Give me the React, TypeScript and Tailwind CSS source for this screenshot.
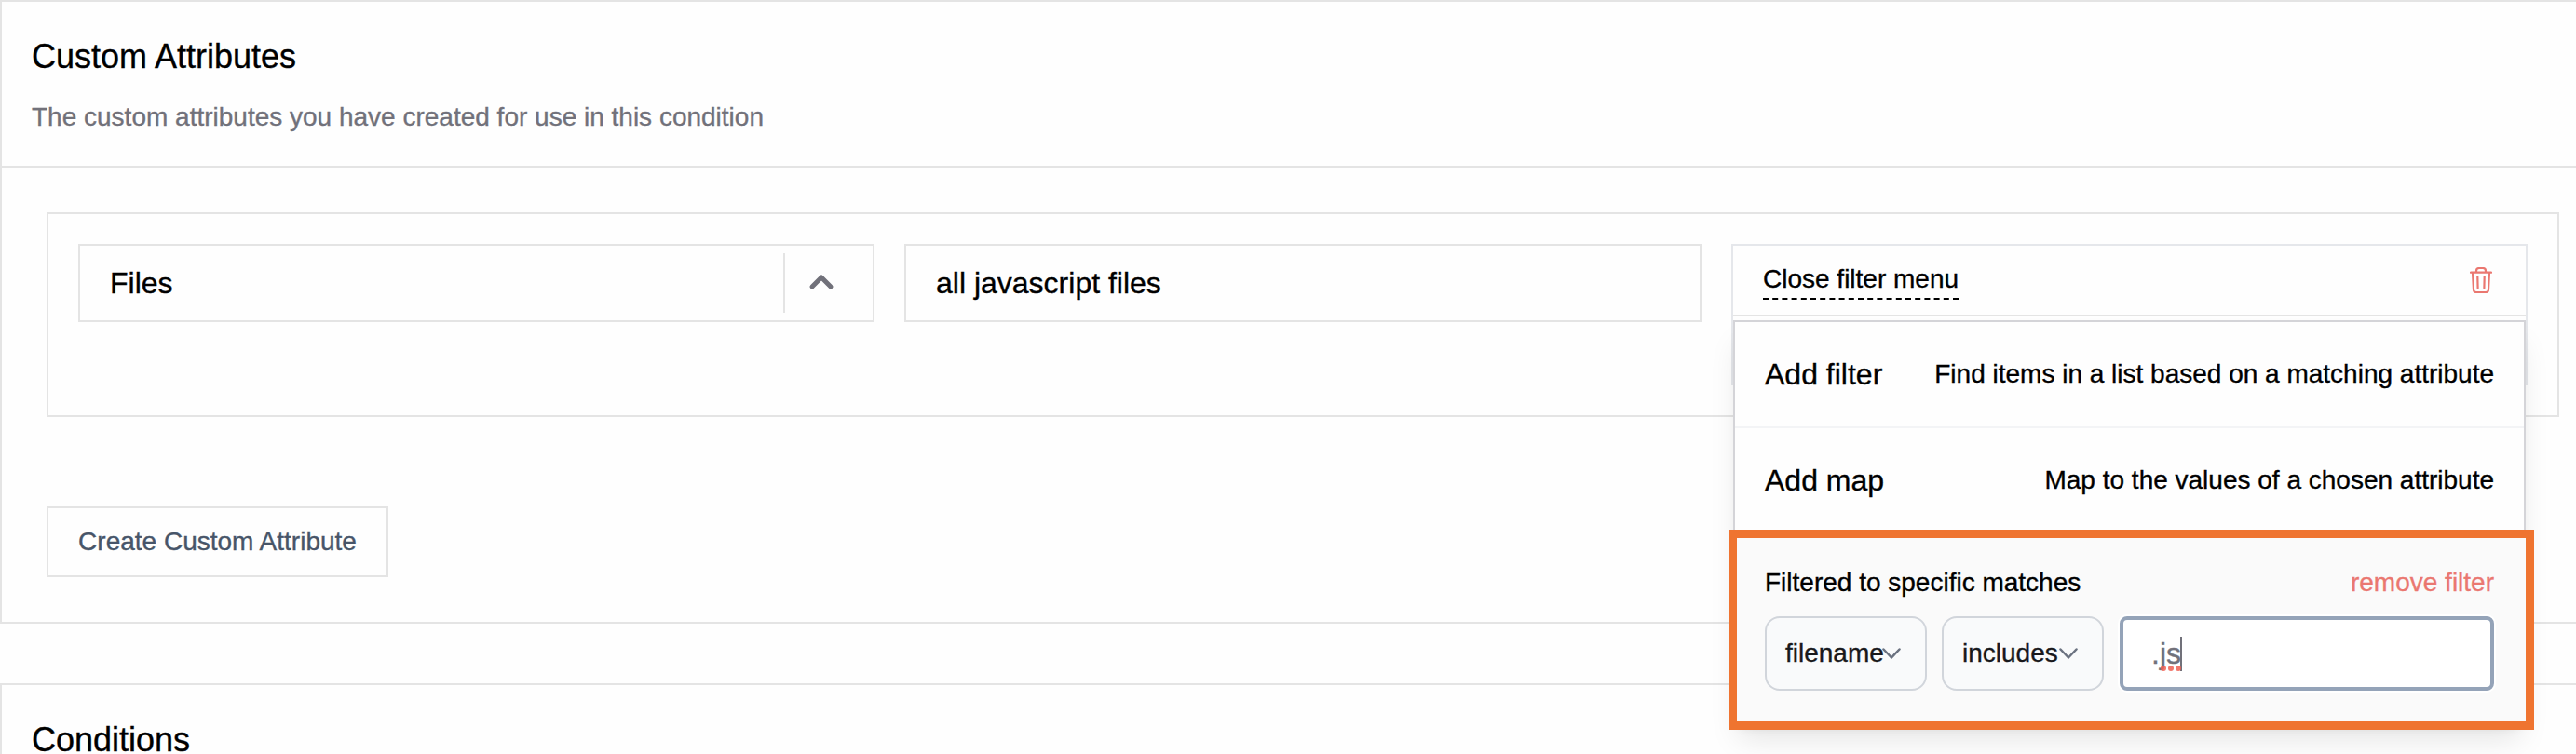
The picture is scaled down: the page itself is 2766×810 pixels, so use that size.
import React from "react";

const line = "border-[#e4e4e4]";

function Trash() {
  return (
    <svg className="mr-1" width="24" height="28" viewBox="0 0 24 28" fill="none" stroke="#ea7770" strokeWidth="2.200" strokeLinecap="round" strokeLinejoin="round">
      <path d="M1 5.700h22M3 6l1 18.200C4.100 26 5 27 6.800 27h10.400c1.800 0 2.700-1 2.800-2.800L21 6M7 5.500V4c0-2 1-3 3-3h4c2 0 3 1 3 3v1.500M8.300 10l.3 12.500M15.700 10l-.3 12.500" />
    </svg>
  );
}

function Chevron() {
  return (
    <svg className="shrink-0" width="20" height="12" viewBox="0 0 20 12" fill="none" stroke="#6b7280" strokeWidth="2.500" strokeLinecap="round" strokeLinejoin="round">
      <path d="M1.500 1.500L10 10.500l8.500-9" />
    </svg>
  );
}

function MenuItem({ title, text }: { title: string; text: string }) {
  return (
    <div className="flex h-[112px] items-center justify-between px-8">
      <span className="text-[32px]">{title}</span>
      <span className="text-[28px]">{text}</span>
    </div>
  );
}

function Pill({ label }: { label: string }) {
  return (
    <div className="flex h-20 w-[174px] items-center rounded-2xl border-2 border-[#d1d5db] bg-[#f9fafb] pl-5 text-[28px] text-[#18181b]">
      <span className="w-[104px] whitespace-nowrap">{label}</span>
      <Chevron />
    </div>
  );
}

export default function App() {
  return (
    <div className="h-[810px] w-[2766px] overflow-hidden bg-[#fefefe] font-['Liberation_Sans',Arial,sans-serif] leading-[40px] text-black [-webkit-text-stroke:0.35px]">
      <section className={`h-[670px] border-2 border-r-0 ${line}`}>
        <header className={`h-[178px] border-b-2 pt-[39px] pl-8 ${line}`}>
          <h2 className="text-[36px]">Custom Attributes</h2>
          <p className="mt-[25px] text-[28px] text-[#71717a]">The custom attributes you have created for use in this condition</p>
        </header>
        <div className="pt-12 pr-[18px] pl-12">
          <div className={`flex h-[220px] items-start gap-8 border-2 p-8 ${line}`}>
            <div className={`flex h-[84px] w-[855px] items-center border-2 pl-8 text-[32px] ${line}`}>
              <span className="flex-1">Files</span>
              <div className={`flex h-16 w-[96px] items-center border-l-2 pl-[25px] ${line}`}>
                <svg className="mb-0.5" width="28" height="18" viewBox="0 0 28 18" fill="none" stroke="#71717a" strokeWidth="5" strokeLinecap="round" strokeLinejoin="round">
                  <path d="M4 14L14 4l10 10" />
                </svg>
              </div>
            </div>
            <div className={`flex h-[84px] w-[856px] items-center border-2 pl-8 text-[32px] ${line}`}>all javascript files</div>
            <div className="relative h-[152px] w-[855px] border-2 border-b-0 border-[#e5e7eb]">
              <div className={`flex h-[76px] items-center justify-between border-b-2 px-8 ${line}`}>
                <span className="border-b-2 border-dashed border-black text-[28px] leading-[40px]">Close filter menu</span>
                <Trash />
              </div>
              <div className="absolute top-20 left-0 z-10 h-[436px] w-[851px] border-2 border-[#d4d4d8] bg-[#fefefe] shadow-[0_20px_30px_-6px_rgba(0,0,0,0.1),0_8px_12px_-8px_rgba(0,0,0,0.1)]">
                <MenuItem title="Add filter" text="Find items in a list based on a matching attribute" />
                <div className="border-t-2 border-[#f3f4f6]">
                  <MenuItem title="Add map" text="Map to the values of a chosen attribute" />
                </div>
                <div className="absolute top-[223px] -left-[7px] h-[215px] w-[865px] border-[9px] border-[#ef7430] bg-[#fafafa] pt-[28px] pr-[34px] pl-[30px]">
                  <div className="flex justify-between text-[28px]">
                    <span>Filtered to specific matches</span>
                    <span className="text-[#ea7770]">remove filter</span>
                  </div>
                  <div className="mt-4 flex gap-4">
                    <Pill label="filename" />
                    <Pill label="includes" />
                    <div className="ml-px flex h-20 flex-1 items-center rounded-lg border-4 border-[#94a3b8] bg-white pl-[30px] text-[32px] text-[#71717a] ring-2 ring-white">
                      <span>.</span>
                      <span className="relative">
                        js
                        <svg className="absolute top-[33px] left-[1px]" width="22" height="6" viewBox="0 0 22 6" fill="#ee5f52" fillOpacity="0.85">
                          <circle cx="3" cy="3" r="3" />
                          <circle cx="11" cy="3" r="3" />
                          <circle cx="19" cy="3" r="3" />
                        </svg>
                      </span>
                      <span className="-ml-px h-[37px] w-0.5 bg-[#71717a]" />
                    </div>
                  </div>
                </div>
              </div>
            </div>
          </div>
          <button className={`mt-24 h-[76px] w-[367px] border-2 text-[28px] text-[#475569] ${line}`}>Create Custom Attribute</button>
        </div>
      </section>
      <section className={`mt-16 h-[200px] border-2 border-r-0 pt-[39px] pl-8 ${line}`}>
        <h2 className="text-[36px]">Conditions</h2>
      </section>
    </div>
  );
}
